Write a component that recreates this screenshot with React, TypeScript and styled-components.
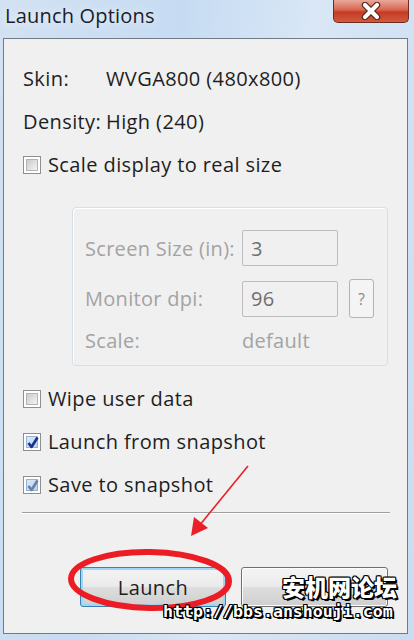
import React from "react";
import styled, { createGlobalStyle } from "styled-components";

const GlobalStyle = createGlobalStyle`
  body {
    margin: 0;
    font-family: "Open Sans", "Noto Sans", sans-serif;
  }
`;

const Window = styled.div`
  position: relative;
  width: 414px;
  height: 640px;
  box-sizing: border-box;
  padding: 0 6px 6px 3px;
  display: flex;
  flex-direction: column;
  overflow: hidden;
  background: linear-gradient(100deg, #d3e2f2 0%, #c6dbf2 35%, #d9e7f6 60%, #c9dcf1 100%);
`;

const TitleBar = styled.div`
  height: 38px;
  display: flex;
  justify-content: space-between;
  align-items: flex-start;
  margin-right: -6px;
`;

const Title = styled.div`
  margin: 2px 0 0 2px;
  font-size: 20px;
  letter-spacing: 0.2px;
  color: #1c1c2a;
  text-shadow: 0 0 8px rgba(255, 255, 255, 0.9);
`;

const CloseButton = styled.div`
  width: 76px;
  height: 23px;
  margin-right: 5px;
  box-sizing: border-box;
  border: 1px solid #6f2b20;
  border-top: none;
  border-radius: 0 0 5px 5px;
  background: linear-gradient(#e9a99b 0%, #d8654f 45%, #c53b23 55%, #d05a3f 100%);
  display: flex;
  align-items: center;
  justify-content: center;
`;

const Panel = styled.div`
  flex: 1;
  border: 1px solid #707b86;
  background: #f0f0f0;
  padding: 18px 19px 0 19px;
  display: flex;
  flex-direction: column;
  color: #1e1e1e;
  font-size: 20px;
  letter-spacing: 0.4px;
`;

const InfoRow = styled.div`
  height: 43px;
  display: flex;
  align-items: center;
`;

const InfoLabel = styled.span`
  width: 83px;
`;

const CheckRow = styled.label`
  height: 43px;
  display: flex;
  align-items: center;
  gap: 7px;
`;

const Box = styled.span<{ $checked?: boolean }>`
  position: relative;
  width: 18px;
  height: 18px;
  box-sizing: border-box;
  border: 1px solid #8e8f8f;
  padding: 2px;
  background: #fff;
  display: flex;

  &::before {
    content: "";
    flex: 1;
    background: ${(p) =>
      p.$checked
        ? "linear-gradient(135deg, #dbe9f7, #b9d3ee)"
        : "linear-gradient(135deg, #cbcbcb, #f4f4f4)"};
    border: 1px solid ${(p) => (p.$checked ? "#90b3d6" : "#b4b4b4")};
  }
`;

const Tick = styled.svg`
  position: absolute;
  left: 2px;
  top: 1px;
`;

const GroupBox = styled.div`
  margin: 21px 0 0 49px;
  width: 316px;
  height: 159px;
  box-sizing: border-box;
  border: 1px solid #d6dfe6;
  border-radius: 4px;
  box-shadow: inset 1px 1px 0 #fff;
  padding: 22px 0 0 12px;
  display: flex;
  flex-direction: column;
  gap: 13px;
  color: #a3a3a3;
  letter-spacing: 0.3px;
`;

const FieldRow = styled.div`
  display: flex;
  align-items: center;
`;

const FieldLabel = styled.span`
  width: 157px;
`;

const Field = styled.div`
  width: 96px;
  height: 36px;
  box-sizing: border-box;
  border: 1px solid #bdbdbd;
  border-radius: 2px;
  background: #f0f0f0;
  padding-left: 8px;
  display: flex;
  align-items: center;
  color: #6f6f6f;
`;

const HelpButton = styled.div`
  width: 25px;
  height: 39px;
  margin-left: 11px;
  box-sizing: border-box;
  border: 1px solid #b3b3b3;
  border-radius: 3px;
  background: #f4f4f4;
  display: flex;
  align-items: center;
  justify-content: center;
  font-size: 16px;
  color: #8a8a8a;
`;

const ScaleRow = styled.div`
  height: 24px;
  margin-top: -3px;
  display: flex;
  align-items: center;
`;

const Options = styled.div`
  margin-top: 11px;
  display: flex;
  flex-direction: column;
`;

const Separator = styled.div`
  margin: 6px -2px 0 -1px;
  height: 1px;
  background: #a0a0a0;
  border-bottom: 1px solid #fff;
`;

const ButtonBar = styled.div`
  margin-top: 53px;
  display: flex;
  justify-content: flex-end;
  gap: 15px;
`;

const PushButton = styled.div<{ $default?: boolean; $width: number }>`
  width: ${(p) => p.$width}px;
  height: 40px;
  box-sizing: border-box;
  border: 1px solid ${(p) => (p.$default ? "#3c7fb1" : "#707070")};
  border-radius: 3px;
  box-shadow: ${(p) => (p.$default ? "inset 0 0 0 2px #9fd6f2" : "inset 0 0 0 1px #fcfcfc")};
  background: linear-gradient(#f4f4f4 0%, #ebebeb 48%, #dddddd 52%, #cfcfcf 100%);
  display: flex;
  align-items: center;
  justify-content: center;
  color: #1e1e1e;
`;

const Annotation = styled.svg`
  position: absolute;
  left: 0;
  top: 0;
  pointer-events: none;
`;

const outline =
  "1px 0 0 #000, -1px 0 0 #000, 0 1px 0 #000, 0 -1px 0 #000, 1px 1px 0 #000, -1px -1px 0 #000, 1px -1px 0 #000, -1px 1px 0 #000, 2px 2px 0 #000";

const WatermarkName = styled.div`
  position: absolute;
  left: 282px;
  top: 572px;
  font-family: "Noto Sans CJK SC", sans-serif;
  font-weight: 900;
  font-size: 23px;
  line-height: 28px;
  color: #fff;
  text-shadow: ${outline};
`;

const WatermarkUrl = styled.div`
  position: absolute;
  left: 163px;
  top: 602px;
  font-family: "DejaVu Sans Mono", monospace;
  font-weight: bold;
  font-size: 16.6px;
  line-height: 20px;
  color: #fff;
  text-shadow: ${outline};
`;

const Check = ({ label, checked, dim }: { label: string; checked?: boolean; dim?: boolean }) => (
  <CheckRow>
    <Box $checked={checked}>
      {checked && (
        <Tick width="14" height="15" viewBox="0 0 14 15">
          <path
            d="M2.5 8 L5.5 12 L11.5 2.5"
            fill="none"
            stroke={dim ? "#6b7fa8" : "#1d2f8c"}
            strokeWidth="2.6"
            strokeLinejoin="round"
          />
        </Tick>
      )}
    </Box>
    {label}
  </CheckRow>
);

export default function App() {
  return (
    <>
      <GlobalStyle />
      <Window>
        <TitleBar>
          <Title>Launch Options</Title>
          <CloseButton>
            <svg width="24" height="18" viewBox="0 0 24 18">
              <path
                d="M6 3 L18 15 M18 3 L6 15"
                stroke="#5b2418"
                strokeWidth="6.5"
                strokeLinecap="round"
              />
              <path d="M6 3 L18 15 M18 3 L6 15" stroke="#fff" strokeWidth="4.2" strokeLinecap="round" />
            </svg>
          </CloseButton>
        </TitleBar>
        <Panel>
          <InfoRow>
            <InfoLabel>Skin:</InfoLabel>
            WVGA800 (480x800)
          </InfoRow>
          <InfoRow>
            <InfoLabel>Density:</InfoLabel>
            High (240)
          </InfoRow>
          <Check label="Scale display to real size" />
          <GroupBox>
            <FieldRow>
              <FieldLabel>Screen Size (in):</FieldLabel>
              <Field>3</Field>
            </FieldRow>
            <FieldRow>
              <FieldLabel>Monitor dpi:</FieldLabel>
              <Field>96</Field>
              <HelpButton>?</HelpButton>
            </FieldRow>
            <ScaleRow>
              <FieldLabel>Scale:</FieldLabel>
              default
            </ScaleRow>
          </GroupBox>
          <Options>
            <Check label="Wipe user data" />
            <Check label="Launch from snapshot" checked />
            <Check label="Save to snapshot" checked dim />
          </Options>
          <Separator />
          <ButtonBar>
            <PushButton $default $width={146}>Launch</PushButton>
            <PushButton $width={147} />
          </ButtonBar>
        </Panel>
        <Annotation width="414" height="640" viewBox="0 0 414 640">
          <path d="M248 466 L199 526" stroke="#e8202a" strokeWidth="1.6" fill="none" />
          <path d="M191 536 L194 517 L208 528 Z" fill="#e8202a" />
          <ellipse
            cx="150"
            cy="580"
            rx="79"
            ry="28"
            fill="none"
            stroke="#ec1c24"
            strokeWidth="6"
            transform="rotate(1 150 580)"
          />
        </Annotation>
        <WatermarkName>安机网论坛</WatermarkName>
        <WatermarkUrl>http://bbs.anshouji.com</WatermarkUrl>
      </Window>
    </>
  );
}
